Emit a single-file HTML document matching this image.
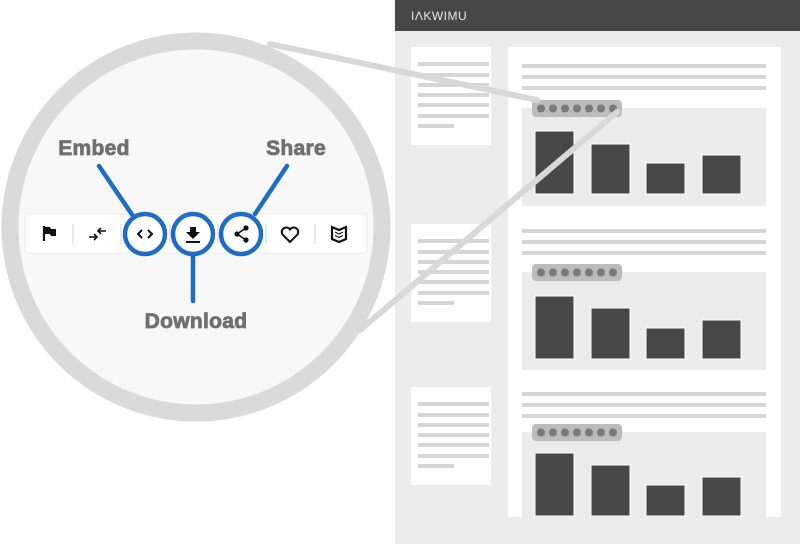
<!DOCTYPE html>
<html><head><style>
body{margin:0;width:800px;height:544px;background:#fff;position:relative;overflow:hidden;font-family:"Liberation Sans",sans-serif}
.a{position:absolute}
</style></head><body>
<div class="a" style="left:395px;top:0;width:405px;height:544px;background:#ececec"></div>
<div class="a" style="left:395px;top:0;width:405px;height:31px;background:#474747"></div>
<div class="a" style="left:411px;top:9px;color:#e8e8e8;font-size:12px;letter-spacing:0.5px">IΛKWIMU</div>
<svg class="a" style="left:0;top:0" width="800" height="544">
<g fill="#fff"><rect x="411" y="47" width="80" height="98"/><rect x="411" y="224" width="80" height="98"/><rect x="411" y="387" width="80" height="98"/><rect x="508" y="47" width="273" height="470"/></g>
<g stroke="#d6d6d6" stroke-width="4">
<path d="M418 64h71M418 75h71M418 85h71M418 95h71M418 105h71M418 116h71M418 126h36"/>
<path d="M418 241h71M418 252h71M418 262h71M418 272h71M418 282h71M418 293h71M418 303h36"/>
<path d="M418 404h71M418 415h71M418 425h71M418 435h71M418 445h71M418 456h71M418 466h36"/>
<path d="M522 66h244M522 77h244M522 88h244M522 231h244M522 242h244M522 253h244M522 394h244M522 405h244M522 416h244"/>
</g>
<g fill="#ebebea"><rect x="522" y="108" width="244" height="98"/><rect x="522" y="272" width="244" height="98"/><rect x="522" y="432" width="244" height="85"/></g>
<g fill="#474747" stroke="#fff" stroke-width="1">
<rect x="535" y="131" width="39" height="63"/><rect x="591" y="144" width="39" height="50"/><rect x="646" y="163" width="39" height="31"/><rect x="702" y="155" width="39" height="39"/>
<rect x="535" y="296" width="39" height="63"/><rect x="591" y="308" width="39" height="51"/><rect x="646" y="328" width="39" height="31"/><rect x="702" y="320" width="39" height="39"/>
<rect x="535" y="453" width="39" height="63"/><rect x="591" y="465" width="39" height="51"/><rect x="646" y="485" width="39" height="31"/><rect x="702" y="477" width="39" height="39"/>
</g>
<g><rect x="532" y="100" width="90" height="17" rx="4" fill="#bcbcbc"/><rect x="532" y="264" width="90" height="17" rx="4" fill="#bcbcbc"/><rect x="532" y="424" width="90" height="17" rx="4" fill="#bcbcbc"/></g>
<g fill="#7a7a7a">
<circle cx="541" cy="108.5" r="4"/><circle cx="553" cy="108.5" r="4"/><circle cx="565" cy="108.5" r="4"/><circle cx="577" cy="108.5" r="4"/><circle cx="589" cy="108.5" r="4"/><circle cx="601" cy="108.5" r="4"/><circle cx="613" cy="108.5" r="4"/>
<circle cx="541" cy="272.5" r="4"/><circle cx="553" cy="272.5" r="4"/><circle cx="565" cy="272.5" r="4"/><circle cx="577" cy="272.5" r="4"/><circle cx="589" cy="272.5" r="4"/><circle cx="601" cy="272.5" r="4"/><circle cx="613" cy="272.5" r="4"/>
<circle cx="541" cy="432.5" r="4"/><circle cx="553" cy="432.5" r="4"/><circle cx="565" cy="432.5" r="4"/><circle cx="577" cy="432.5" r="4"/><circle cx="589" cy="432.5" r="4"/><circle cx="601" cy="432.5" r="4"/><circle cx="613" cy="432.5" r="4"/>
</g>
<g stroke="#d8d8d8" stroke-width="6" stroke-linecap="round"><path d="M270 44L537 100"/><path d="M617 112L360 330"/></g>
<circle cx="196" cy="227" r="186" fill="#f8f8f8" stroke="#dadada" stroke-width="17"/>
<rect x="25" y="214" width="342" height="39" rx="4" fill="#fff" stroke="#ececec"/>
<g stroke="#e4e4e4" stroke-width="1.5"><path d="M73 224v20M121 224v20M170 224v20M218 224v20M266 224v20M315 224v20"/></g>
<path d="M44 226v15" stroke="#111" stroke-width="2.2"/><path d="M45 227h5l1 2h5v7h-5l-1-2h-5z" fill="#111"/>
<g stroke="#111" stroke-width="1.6" fill="none"><path d="M89 237h8M94 234l3 3-3 3M106 231h-8M101 228l-3 3 3 3"/>
<path d="M142 230l-4 4 4 4M148 230l4 4-4 4" stroke-width="2"/>
<path d="M290 242l-7.5-7.5a4.3 4.3 0 0 1 7.5-5a4.3 4.3 0 0 1 7.5 5z" stroke-width="2"/>
<path d="M332 227l7 3 7-3v12l-7 3-7-3z" stroke-width="2.2"/><path d="M335 232l4 2 4-2M335 235.5l4 2 4-2" stroke-width="1.1"/></g>
<path d="M190 227h6v5h4l-7 7-7-7h4z" fill="#111"/><rect x="186" y="241" width="14" height="2" fill="#111"/>
<g fill="#111"><circle cx="246" cy="228" r="2.6"/><circle cx="237" cy="234" r="2.6"/><circle cx="246" cy="240" r="2.6"/></g>
<path d="M246 228l-9 6 9 6" stroke="#111" stroke-width="1.6" fill="none"/>
<g stroke="#1f6ec6" stroke-width="4.5" fill="none" stroke-linecap="round">
<circle cx="145" cy="234" r="20"/><circle cx="193" cy="234" r="20"/><circle cx="241" cy="234" r="20"/>
<path d="M99 166L133 216M287 166L255 214M193 254V301"/></g>
<g fill="#707070" stroke="#707070" stroke-width="0.8" font-family="Liberation Sans,sans-serif" font-weight="bold" font-size="21" text-anchor="middle" letter-spacing="0.3">
<text x="94" y="155">Embed</text><text x="296" y="155">Share</text><text x="196" y="328">Download</text></g>
</svg>
</body></html>
